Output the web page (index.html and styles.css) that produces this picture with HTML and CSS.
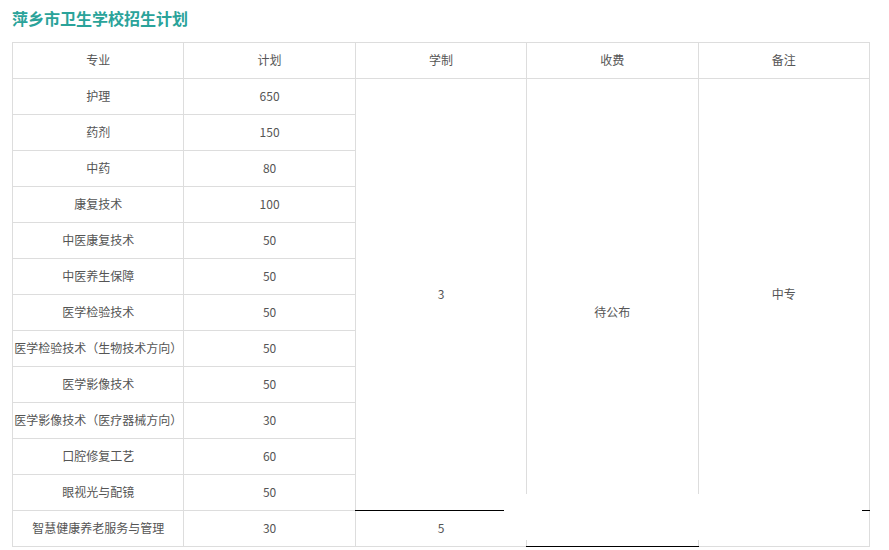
FILE: index.html
```html
<!DOCTYPE html>
<html lang="zh-CN">
<head>
<meta charset="utf-8">
<title>萍乡市卫生学校招生计划</title>
<link rel="stylesheet" href="styles.css">
</head>
<body>
<div class="page">
  <h2 class="title">萍乡市卫生学校招生计划</h2>
  <div class="table-wrap">
    <table class="plan">
      <thead>
        <tr><td>专业</td><td>计划</td><td>学制</td><td>收费</td><td>备注</td></tr>
      </thead>
      <tbody>
        <tr><td>护理</td><td>650</td><td rowspan="12" class="blk-bottom">3</td><td rowspan="13" class="blk-bottom">待公布</td><td rowspan="12" class="blk-bottom">中专</td></tr>
        <tr><td>药剂</td><td>150</td></tr>
        <tr><td>中药</td><td>80</td></tr>
        <tr><td>康复技术</td><td>100</td></tr>
        <tr><td>中医康复技术</td><td>50</td></tr>
        <tr><td>中医养生保障</td><td>50</td></tr>
        <tr><td>医学检验技术</td><td>50</td></tr>
        <tr><td>医学检验技术<span class="paren" lang="zh-TW">（</span>生物技术方向<span class="paren" lang="zh-TW">）</span></td><td>50</td></tr>
        <tr><td>医学影像技术</td><td>50</td></tr>
        <tr><td>医学影像技术<span class="paren" lang="zh-TW">（</span>医疗器械方向<span class="paren" lang="zh-TW">）</span></td><td>30</td></tr>
        <tr><td>口腔修复工艺</td><td>60</td></tr>
        <tr><td>眼视光与配镜</td><td>50</td></tr>
        <tr><td>智慧健康养老服务与管理</td><td>30</td><td class="blk-top">5</td><td class="blk-top"></td></tr>
      </tbody>
    </table>
    <div class="mask"></div>
  </div>
</div>
</body>
</html>
```
FILE: styles.css
```css
html, body {
  margin: 0;
  padding: 0;
  background: #fff;
}
body {
  font-family: "Noto Sans CJK SC", "Microsoft YaHei", "Noto Sans", sans-serif;
  color: #555;
}
.page {
  padding: 8px 12px;
}
.title {
  margin: 0 0 14px;
  font-size: 16px;
  line-height: 20px;
  font-weight: bold;
  color: #2aa39a;
}
.table-wrap {
  position: relative;
  width: 858px;
}
.plan {
  width: 858px;
  border-collapse: collapse;
  table-layout: fixed;
  font-size: 12px;
}
.plan td {
  border: 1px solid #ddd;
  text-align: center;
  vertical-align: middle;
  padding: 0 0 2px;
  white-space: nowrap;
}
.plan tr {
  height: 36px;
}
.paren {
  font-family: "Noto Sans CJK TC", "Noto Sans CJK SC", sans-serif;
}
.plan td.blk-bottom {
  border-bottom-color: #000;
}
.plan td.blk-top {
  border-top-color: #000;
}
.mask {
  position: absolute;
  left: 492px;
  top: 452px;
  width: 358px;
  height: 46px;
  background: #fff;
}
```
